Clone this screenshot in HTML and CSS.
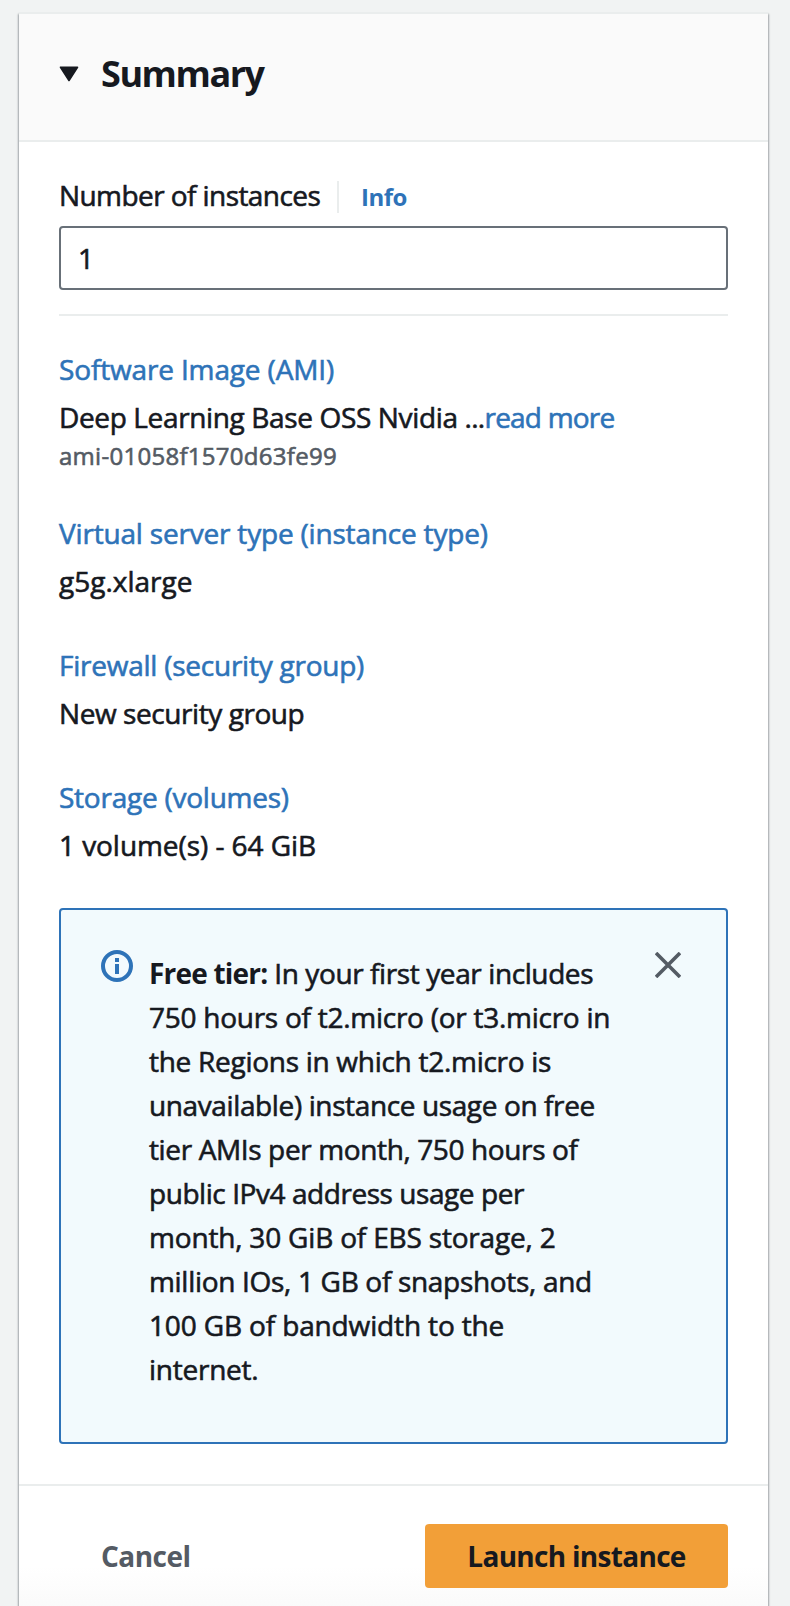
FILE: index.html
```html
<!DOCTYPE html>
<html lang="en">
<head>
<meta charset="utf-8">
<title>Summary</title>
<link rel="stylesheet" href="styles.css">
</head>
<body>
<main class="card">
  <header class="card-header">
    <svg class="caret" width="20" height="16" viewBox="0 0 20 16"><path d="M1.5 1.2h17L10 14.5z" fill="#16191f" stroke="#16191f" stroke-width="1.6" stroke-linejoin="round"/></svg>
    <h2 class="title">Summary</h2>
  </header>
  <section class="card-body">
    <div class="field-label">
      <label class="label-text" for="count">Number of instances</label>
      <span class="divider"></span>
      <a class="info-link">Info</a>
    </div>
    <input class="count-input" id="count" type="text" value="1">
    <hr class="rule">
    <dl class="details">
      <div class="detail detail-ami">
        <dt class="term">Software Image (AMI)</dt>
        <dd class="value"><span class="ami-name">Deep Learning Base OSS Nvidia </span><span class="dots">...</span><a class="read-more">read more</a></dd>
        <dd class="ami-id">ami-01058f1570d63fe99</dd>
      </div>
      <div class="detail detail-type">
        <dt class="term">Virtual server type (instance type)</dt>
        <dd class="value">g5g.xlarge</dd>
      </div>
      <div class="detail detail-firewall">
        <dt class="term">Firewall (security group)</dt>
        <dd class="value">New security group</dd>
      </div>
      <div class="detail detail-storage">
        <dt class="term">Storage (volumes)</dt>
        <dd class="value">1 volume(s) - 64 GiB</dd>
      </div>
    </dl>
    <aside class="alert">
      <svg class="alert-icon" width="32" height="32" viewBox="0 0 32 32"><circle cx="16" cy="16" r="14" fill="none" stroke="#2e73b8" stroke-width="4"/><path d="M14 8h4v4h-4zM14 14h4v10h-4z" fill="#2e73b8"/></svg>
      <p class="alert-text">
        <span class="line"><b class="lead">Free tier:</b> In your first year includes</span>
        <span class="line">750 hours of t2.micro (or t3.micro in</span>
        <span class="line">the Regions in which t2.micro is</span>
        <span class="line">unavailable) instance usage on free</span>
        <span class="line">tier AMIs per month, 750 hours of</span>
        <span class="line">public IPv4 address usage per</span>
        <span class="line">month, 30 GiB of EBS storage, 2</span>
        <span class="line">million IOs, 1 GB of snapshots, and</span>
        <span class="line">100 GB of bandwidth to the</span>
        <span class="line">internet.</span>
      </p>
      <svg class="close" width="26" height="26" viewBox="0 0 26 26"><path d="M1 1l24 24M25 1L1 25" fill="none" stroke="#545b64" stroke-width="3.6"/></svg>
    </aside>
  </section>
  <footer class="card-footer">
    <button class="cancel">Cancel</button>
    <button class="launch">Launch instance</button>
  </footer>
</main>
</body>
</html>
```
FILE: styles.css
```css
* { box-sizing: border-box; }
html, body { height: 1606px; margin: 0; overflow: hidden; }
body {
  padding: 12px 22px 0 19px;
  background: #f1f3f3;
  color: #16191f;
  font: 400 28px/40px "Open Sans", "Noto Sans", sans-serif;
  -webkit-text-stroke: 0.6px currentColor;
  white-space: nowrap;
}
.card {
  height: 1640px;
  background: #fff;
  border-top: 2px solid #eaeded;
  box-shadow: 0 2px 2px rgba(0, 28, 36, .4), 1px 2px 2px rgba(0, 7, 22, .18), -1px 2px 2px rgba(0, 7, 22, .18);
}
.card-header {
  display: flex;
  height: 128px;
  padding: 38px 40px 0;
  background: #fafafa;
  border-bottom: 2px solid #eaeded;
}
.caret { margin: 14px 22px 0 0; }
.title { margin: 0; font-size: 36px; line-height: 44px; font-weight: 700; letter-spacing: -1.45px; -webkit-text-stroke: 0; }
.card-body { padding: 35px 40px 40px; }
.field-label { display: flex; height: 36px; line-height: 36px; }
.label-text { width: 261px; letter-spacing: -.57px; }
.divider { width: 2px; height: 32px; margin: 4px 22px 0 17px; background: #eaeded; }
.info-link { padding-top: 2px; color: #2e73b8; font-size: 24px; font-weight: 700; letter-spacing: -.5px; -webkit-text-stroke: 0; }
.count-input {
  display: block;
  width: 669px;
  height: 64px;
  margin: 13px 0 24px;
  padding: 0 17px 1px;
  border: 2px solid #687078;
  border-radius: 4px;
  background: #fff;
  color: inherit;
  font: inherit;
  -webkit-text-stroke: inherit;
}
.rule { height: 2px; margin: 0; border: 0; background: #eaeded; }
.details { margin: 33px 0 43px; }
.detail { margin-bottom: 44px; }
.detail-ami { margin-bottom: 41px; }
.detail:last-child { margin-bottom: 0; }
.term { color: #2e73b8; letter-spacing: -.24px; }
.value { margin: 8px 0 0; }
.detail-ami .term { letter-spacing: -.15px; }
.ami-name { letter-spacing: -.36px; }
.dots { letter-spacing: -.7px; }
.read-more { color: #2e73b8; letter-spacing: -.79px; }
.ami-id { margin: 3px 0 0; color: #545b64; font-size: 24px; line-height: 32px; letter-spacing: .28px; }
.detail-type .term { letter-spacing: -.19px; }
.detail-type .value { letter-spacing: 0; }
.detail-firewall .value { letter-spacing: -.43px; }
.detail-storage .value { letter-spacing: -.06px; }
.alert {
  display: flex;
  align-items: flex-start;
  height: 536px;
  padding: 40px 45px 0 40px;
  border: 2px solid #2e73b8;
  border-radius: 4px;
  background: #f2fafd;
}
.alert-icon { flex: none; margin-right: 16px; }
.alert-text { flex: 1; margin: 1px 0 0; line-height: 44px; }
.line { display: block; letter-spacing: -.4px; }
.lead { font-weight: 700; letter-spacing: -.8px; -webkit-text-stroke: 0; }
.line:nth-child(2) { letter-spacing: -.26px; }
.line:nth-child(3) { letter-spacing: -.28px; }
.line:nth-child(4) { letter-spacing: -.38px; }
.line:nth-child(5) { letter-spacing: -.37px; }
.line:nth-child(6) { letter-spacing: -.44px; }
.line:nth-child(7) { letter-spacing: -.18px; }
.line:nth-child(8) { letter-spacing: -.31px; }
.line:nth-child(9) { letter-spacing: -.14px; }
.line:nth-child(10) { letter-spacing: -.25px; }
.close { flex: none; margin-top: 2px; }
.card-footer {
  display: flex;
  justify-content: space-between;
  height: 160px;
  padding: 38px 40px 0;
  border-top: 2px solid #eaeded;
  background: linear-gradient(#fff 80px, #fafafa 124px);
}
.cancel, .launch {
  height: 64px;
  border: 0;
  border-radius: 4px;
  padding: 0;
  font: 700 28px/40px "Open Sans", "Noto Sans", sans-serif;
  -webkit-text-stroke: 0;
}
.cancel { padding-left: 42px; background: none; color: #545b64; letter-spacing: -.52px; }
.launch { width: 303px; background: #f29f38; color: #16191f; letter-spacing: -.7px; }
```
